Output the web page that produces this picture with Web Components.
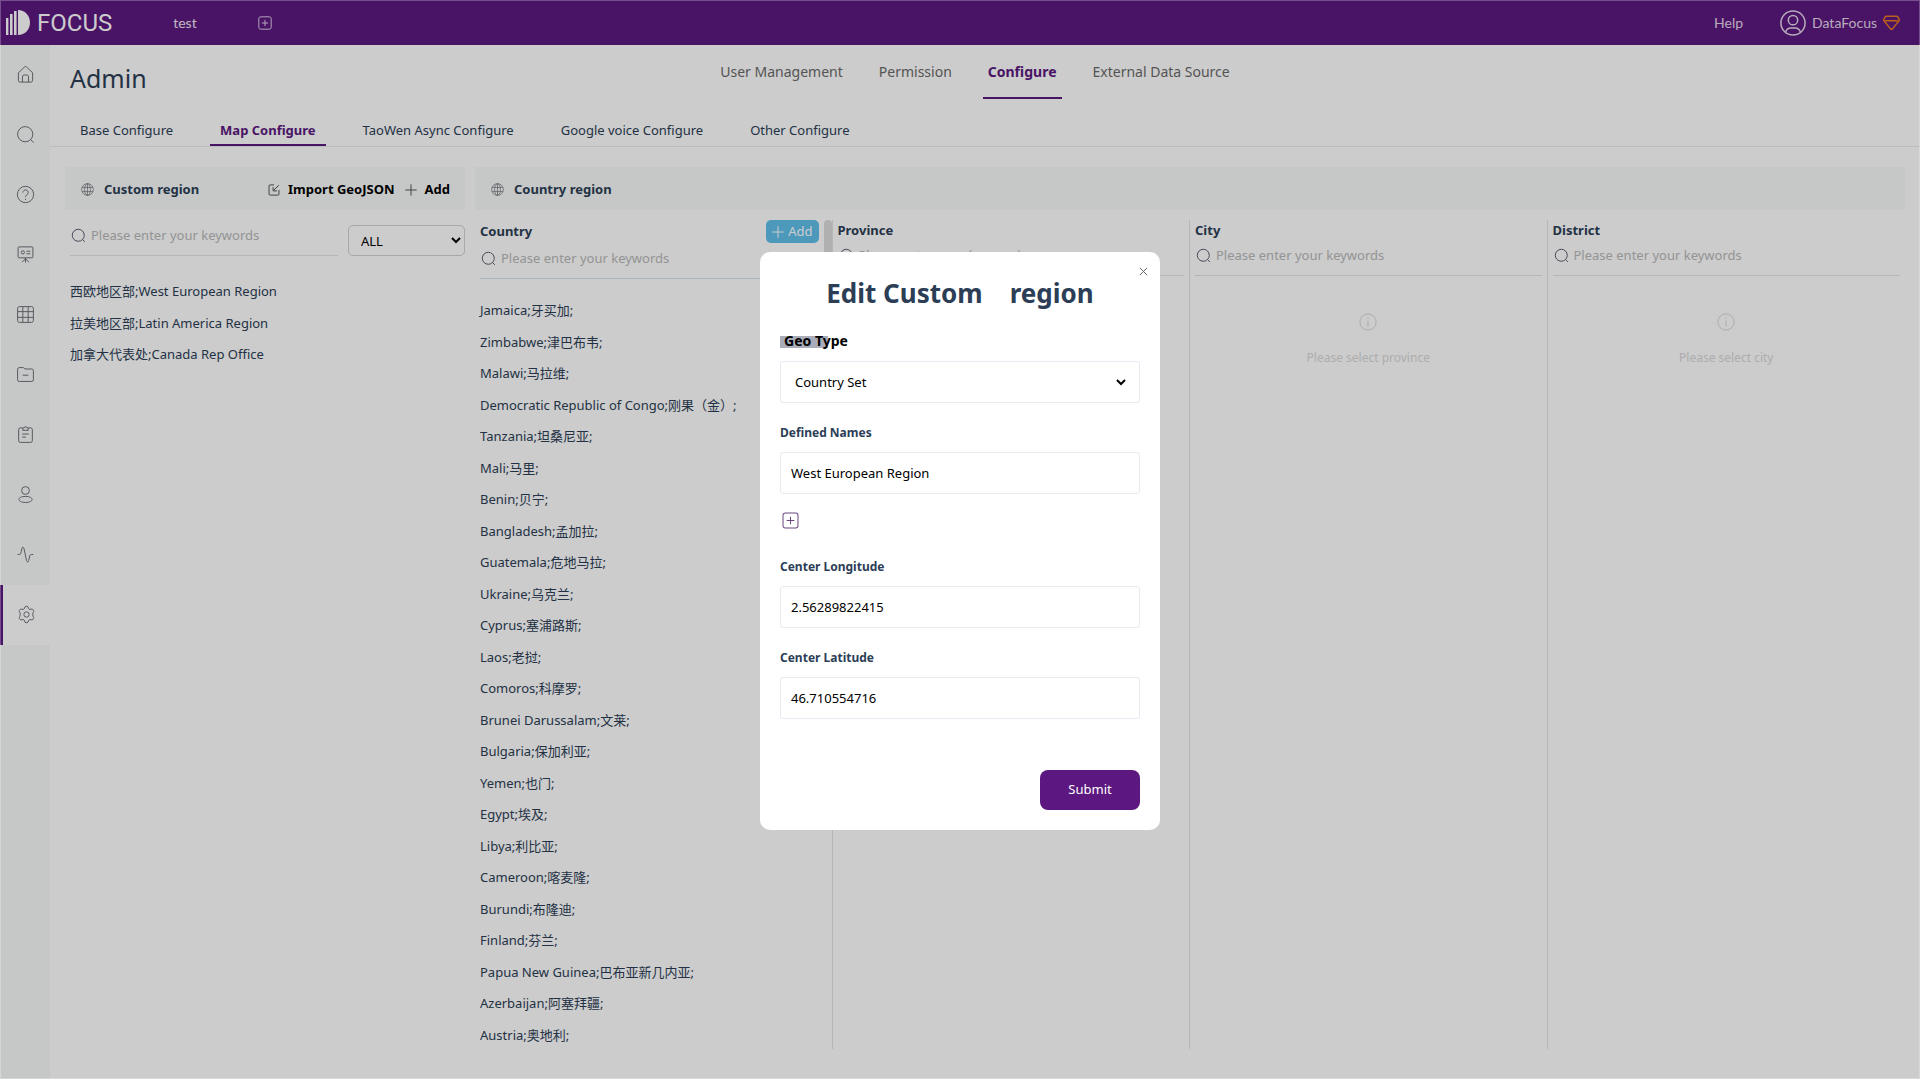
<!DOCTYPE html>
<html lang="en">
<head>
<meta charset="utf-8">
<title>Admin - Map Configure</title>
<style>
  :root {
    --purple: #5c1880;
    --ink: #2c3e56;
    --tint: #f8fbfa;
    --line: #e4e4e4;
    --muted: #b9b9b9;
  }
  html, body { height: 100%; }
  body {
    margin: 0;
    background: #fff;
    color: var(--ink);
    font: 13px/1.5 "Noto Sans", "Noto Sans CJK SC", sans-serif;
    overflow: hidden;
  }
</style>
</head>
<body>
<admin-app></admin-app>

<script>
const ICONS = {
  home: '<path d="M2.5 8.2 9.2 1.9a1.2 1.2 0 0 1 1.6 0l6.7 6.3v8a1.8 1.8 0 0 1-1.8 1.8H4.3a1.8 1.8 0 0 1-1.8-1.8zM6.8 18v-5.5a2 2 0 0 1 2-2h2.4a2 2 0 0 1 2 2V18"/>',
  search: '<circle cx="9.7" cy="9.7" r="8"/><path d="m15.3 15.3 3.2 3.2"/>',
  help: '<circle cx="10" cy="10" r="8.6"/><path d="M7.2 8a2.8 2.8 0 1 1 4.4 2.300c-1.100.8-1.600 1.300-1.600 2.500M10 14.400v1.300"/>',
  board: '<rect x="2.200" y="2" width="15.600" height="11.500" rx="1"/><circle cx="7.200" cy="7.800" r="1.700"/><path d="M11 6.500h4M11 9.200h4M10 13.500v5M10 14.500l-3.600 3.600M10 14.500l3.600 3.600"/>',
  table: '<rect x="1.700" y="1.700" width="16.600" height="16.600" rx="2"/><path d="M1.700 7h16.600M1.700 13h16.600M7.200 1.700v16.600M12.800 1.700v16.600"/>',
  folder: '<path d="M1.700 4.500a1.800 1.800 0 0 1 1.800-1.800h4.300l1.500 1.500h7.200a1.800 1.800 0 0 1 1.800 1.800v9.500a1.800 1.800 0 0 1-1.800 1.800h-13a1.800 1.800 0 0 1-1.800-1.800zM7 10.700h6"/>',
  clip: '<path d="M6.800 3H4.600a1.800 1.800 0 0 0-1.800 1.800v11.700a1.800 1.800 0 0 0 1.800 1.800h10.800a1.800 1.800 0 0 0 1.800-1.800V4.800A1.800 1.800 0 0 0 15.400 3h-2.200M7.200 5.600V3h1.600a1.300 1.300 0 0 1 2.600 0h1.500v2.600zM6.500 9.500h7M6.500 12.700h4"/>',
  user: '<circle cx="10" cy="5.800" r="4.100"/><path d="M3 15.200c0-1.500 2.500-3.200 7-3.200s7 1.700 7 3.200-2.500 3.200-7 3.200-7-1.700-7-3.200z"/>',
  pulse: '<path d="M1.800 10h1.500c1.500 0 1.700-.8 2.200-3L6.200 3.800c.4-2 1.800-2 2.200 0l2.700 12.600c.5 2 1.900 2 2.300 0l.8-3.800c.4-1.900.8-2.600 2.300-2.600h1.700"/>',
  gear: '<circle cx="10" cy="10" r="2.800"/><path d="M8.400 1.900q1.600-1.300 3.200 0l.6 1.900q.4.900 1.500.8l2-.3q1.300.2 1.900 1.600.2.800-.6 1.900-.9 2.200 0 4.400.8 1.100.6 1.900-.6 1.400-1.900 1.600l-2-.3q-1.100-.1-1.500.8l-.6 1.900q-1.600 1.300-3.200 0l-.6-1.900q-.4-.9-1.500-.8l-2 .3q-1.300-.2-1.900-1.600-.2-.8.6-1.900.9-2.200 0-4.400-.8-1.100-.6-1.900.6-1.400 1.900-1.600l2 .3q1.100.1 1.500-.8z"/>',
  globe: '<circle cx="10" cy="10" r="9"/><ellipse cx="10" cy="10" rx="4.500" ry="9"/><path d="M10 1v18M1.700 6.800h16.600M1.700 13.200h16.600"/>',
  import: '<path d="M10 1.500H3.500a1.800 1.800 0 0 0-1.800 1.800v13.400a1.800 1.800 0 0 0 1.800 1.800h13a1.800 1.800 0 0 0 1.800-1.800V10M18 2 9 11M8.500 5v6.500H15"/>',
  plus: '<path d="M10 .5v19M.5 10h19"/>',
  addbox: '<rect x="1.200" y="1.200" width="17.600" height="17.600" rx="2.500"/><path d="M10 5.500v9M5.500 10h9"/>',
  close: '<path d="m2 2 16 16M18 2 2 18"/>',
  info: '<circle cx="10" cy="10" r="9"/><path d="M10 8.500V15M10 5v1.600"/>',
  avatar: '<circle cx="10" cy="10" r="9.300"/><circle cx="10" cy="7.800" r="3.600"/><path d="M4.300 17c.7-2.300 2-3.200 4-3.200h3.400c2 0 3.300.9 4 3.200"/>',
  gem: '<path d="M4 2.500h12q.8 0 1.300.7l1.600 2.700q.6 1-.1 2l-7.400 9.300q-1.400 1.500-2.800 0L1.200 7.900q-.7-1-.1-2l1.600-2.700q.5-.7 1.300-.7zM2.500 8h15"/>'
};

/* Base class: clones one template per element type into an open shadow root. */
class Base extends HTMLElement {
  connectedCallback() {
    if (this.shadowRoot) return;
    const t = document.createElement('template');
    t.innerHTML = '<style>:host,*{box-sizing:border-box}button,input,select{font:inherit;margin:0}</style>' + this.view();
    this.attachShadow({ mode: 'open' }).append(t.content.cloneNode(true));
  }
  attr(n, d = '') { return this.getAttribute(n) ?? d; }
}

class UiIcon extends Base {
  view() {
    const s = this.attr('size', '18');
    const w = this.attr('stroke', '1') * 20 / s;
    return `<style>:host{display:inline-flex;flex:none}svg{display:block}</style>
    <svg width="${s}" height="${s}" viewBox="0 0 20 20" fill="none" stroke="currentColor" stroke-width="${w}" aria-hidden="true">${ICONS[this.attr('name')]}</svg>`;
  }
}

class AppHeader extends Base {
  view() {
    return `<style>
      :host{display:flex;align-items:center;height:45px;flex:none;background:var(--purple);color:#fff;padding:0 20px 0 6px;font-size:14px}
      .brand{display:flex;align-items:center;gap:7px;font:24px/44px Roboto,sans-serif;color:inherit;text-decoration:none}
      .tab{margin-left:61px;color:#f0e8f4;text-decoration:none;font-family:Lato,sans-serif}
      button{display:flex;padding:0;border:0;background:none;color:#e0cfe8;margin-left:61px}
      nav{margin-left:auto;display:flex;align-items:center;color:#e4d8ea;font-family:Lato,sans-serif}
      a{color:inherit;text-decoration:none}
      .help{margin-right:37px}
      .me{display:flex;align-items:center;gap:6px}
      .gem{color:#ec7a22}
    </style>
    <a class="brand" href="#"><svg width="24" height="25" viewBox="0 0 24 25" fill="currentColor" aria-hidden="true">
      <path d="M0 8h2.400v17H0zM4 4h2.600v21H4zM8 1h2.600v24H8zM12 0c7 0 12 5.500 12 12.500S19 25 12 25z"/></svg><span>FOCUS</span></a>
    <a class="tab" href="#">test</a>
    <button aria-label="New tab"><ui-icon name="addbox" size="14"></ui-icon></button>
    <nav><a class="help" href="#">Help</a>
      <a class="me" href="#"><ui-icon name="avatar" size="26" stroke="1.500"></ui-icon><span>DataFocus</span><ui-icon class="gem" name="gem" size="17" stroke="1.500"></ui-icon></a></nav>`;
  }
}

class AppSidebar extends Base {
  view() {
    const items = ['home','search','help','board','table','folder','clip','user','pulse','gear'];
    return `<style>
      :host{display:block;width:50px;flex:none;background:var(--tint);color:#6e7078}
      nav{display:flex;flex-direction:column}
      a{display:flex;height:60px;padding-bottom:2px;align-items:center;justify-content:center;color:inherit}
      a.on{background:#fff;border-left:3px solid var(--purple)}
    </style><nav>${items.map(n => `<a href="#" aria-label="${n}"${n === 'gear' ? ' class="on" aria-current="page"' : ''}><ui-icon name="${n}" size="19"></ui-icon></a>`).join('')}</nav>`;
  }
}

class NavTabs extends Base {
  view() {
    const top = this.attr('kind') === 'top';
    return `<style>
      :host{display:block}
      nav{display:flex;gap:${top ? 26 : 27}px}
      a{display:block;color:${top ? '#6a6a6a' : 'inherit'};text-decoration:none;white-space:nowrap;border-bottom:2px solid transparent;
        ${top ? 'padding:2px 5px 0;font-size:14px;line-height:50px' : 'padding:2px 10px 0;line-height:28px'}}
      a.on{color:var(--purple);font-weight:bold;border-color:var(--purple)}
    </style><nav>${this.attr('items').split('|').map(t => t === this.attr('active')
      ? `<a class="on" href="#" aria-current="page">${t}</a>` : `<a href="#">${t}</a>`).join('')}</nav>`;
  }
}

class SearchField extends Base {
  view() {
    return `<style>
      :host{display:block}
      label{display:flex;align-items:center;gap:5px;height:36px;padding:0 0 5px 1px;border-bottom:1px solid var(--rule,var(--line))}
      input{flex:1;min-width:0;border:0;padding:1px 0 0;background:none;outline:0;color:inherit}
      input::placeholder{color:var(--muted);opacity:1}
      ui-icon{color:#5c6070}
    </style><label><ui-icon name="search" size="15"></ui-icon><input type="text" placeholder="Please enter your keywords" aria-label="Please enter your keywords"></label>`;
  }
}

class PanelHead extends Base {
  view() {
    return `<style>
      :host{display:flex;align-items:center;gap:10px;height:43px;background:var(--tint);padding:2px 15px 0 16px}
      h2{margin:0;font:inherit;font-weight:bold;flex:1}
      ui-icon{color:#6e7078}
    </style><ui-icon name="globe" size="13" stroke=".7"></ui-icon><h2>${this.attr('label')}</h2><slot></slot>`;
  }
}

class PlainAction extends Base {
  view() {
    return `<style>
      :host{display:block}
      button{display:flex;align-items:center;gap:8px;border:0;padding:0;background:none;color:#000;font-weight:bold}
      ui-icon{color:#555}
    </style><button><ui-icon name="${this.attr('icon')}" size="12"></ui-icon><slot></slot></button>`;
  }
}

class RegionList extends Base {
  view() {
    return `<style>
      :host{display:block}
      ul{list-style:none;margin:0;padding:0}
      li{padding:6px 0;white-space:nowrap}
    </style><ul>${this.attr('items').split('|').map(t => `<li>${t}</li>`).join('')}</ul>`;
  }
}

class GeoColumn extends Base {
  view() {
    return `<style>
      :host{display:block;width:25%;flex:none;padding:0 5px;border-right:1px solid var(--line)}
      :host(:last-child){border-right:0}
      h3{margin:0;font-size:13px;line-height:20px}
      .empty{display:flex;flex-direction:column;align-items:center;gap:18px;padding-top:37px;color:#d9d9d9;font-size:12px}
      p{margin:0;line-height:18px}
    </style><h3>${this.attr('label')}</h3><search-field></search-field>
    ${this.attr('empty') ? `<div class="empty"><ui-icon name="info" size="18"></ui-icon><p>${this.attr('empty')}</p></div>` : ''}`;
  }
}

class CountryColumn extends Base {
  view() {
    return `<style>
      :host{display:flex;gap:5px;width:25%;flex:none;padding-left:5px;border-right:1px solid var(--line);overflow:hidden}
      .body{flex:1;min-width:0;--rule:#d5e0ec}
      header{display:flex;align-items:center;justify-content:space-between;height:23px}
      h3{margin:0;font-size:13px}
      button{display:flex;align-items:center;gap:4px;height:23px;padding:0 6px;border:0;border-radius:5px;background:#5fc0ec;color:#fff}
      region-list{margin-top:16px}
      .thumb{width:8px;height:320px;border-radius:4px;background:#dcdcdc}
    </style><div class="body"><header><h3>Country</h3><button><ui-icon name="plus" size="12"></ui-icon>Add</button></header>
    <search-field></search-field>
    <region-list items="Jamaica;牙买加;|Zimbabwe;津巴布韦;|Malawi;马拉维;|Democratic Republic of Congo;刚果（金）;|Tanzania;坦桑尼亚;|Mali;马里;|Benin;贝宁;|Bangladesh;孟加拉;|Guatemala;危地马拉;|Ukraine;乌克兰;|Cyprus;塞浦路斯;|Laos;老挝;|Comoros;科摩罗;|Brunei Darussalam;文莱;|Bulgaria;保加利亚;|Yemen;也门;|Egypt;埃及;|Libya;利比亚;|Cameroon;喀麦隆;|Burundi;布隆迪;|Finland;芬兰;|Papua New Guinea;巴布亚新几内亚;|Azerbaijan;阿塞拜疆;|Austria;奥地利;"></region-list></div>
    <div class="thumb"></div>`;
  }
}

class EditDialog extends Base {
  view() {
    return `<style>
      :host{position:fixed;inset:0;display:flex;align-items:center;justify-content:center;padding-top:2px;background:rgba(0,0,0,.2);border:1px solid rgba(255,255,255,.25)}
      form{position:relative;width:400px;padding:20px;border-radius:10px;background:#fff;display:flex;flex-direction:column}
      h2{margin:0 0 16px;text-align:center;font-size:26px;line-height:42px;white-space:pre}
      .f{display:flex;flex-direction:column;gap:9px;margin-bottom:20px}
      label{font-size:12px;line-height:20px;font-weight:bold}
      label.geo{font-size:14px;line-height:22px;color:#000;align-self:flex-start;padding:0 4px;background:linear-gradient(#a9adb9,#a9adb9) 0 6px/48px 12px no-repeat}
      input,.box{height:42px;width:100%;border:1px solid #e6ebf2;border-radius:3px;background:#fff;color:#000;padding:0 10px;outline:0}
      .box{display:flex}
      select{flex:1;border:0;padding:0;background:#fff;color:#000;outline:0}
      .more,.x{display:flex;border:0;padding:0;background:none}
      .more{margin:-2px 0 28px 2px;color:#6a4680;align-self:flex-start}
      .x{position:absolute;right:12px;top:15px;color:#6a6070}
      .go{align-self:flex-end;width:100px;height:40px;margin-top:31px;border:0;border-radius:8px;background:var(--purple);color:#fff}
    </style><form onsubmit="return false" role="dialog" aria-labelledby="t">
      <button type="button" class="x" aria-label="Close"><ui-icon name="close" size="9"></ui-icon></button>
      <h2 id="t">Edit Custom    region</h2>
      <div class="f"><label class="geo" for="g">Geo Type</label><div class="box"><select id="g"><option>Country Set</option></select></div></div>
      <div class="f"><label for="n">Defined Names</label><input id="n" type="text" value="West European Region"></div>
      <button type="button" class="more" aria-label="Add name"><ui-icon name="addbox" size="17"></ui-icon></button>
      <div class="f"><label for="lo">Center Longitude</label><input id="lo" type="text" value="2.56289822415"></div>
      <div class="f"><label for="la">Center Latitude</label><input id="la" type="text" value="46.710554716"></div>
      <button class="go">Submit</button>
    </form>`;
  }
}

class AdminApp extends Base {
  view() {
    return `<style>
      :host{display:flex;flex-direction:column;height:100vh}
      .shell{display:flex;flex:1;min-height:0}
      main{flex:1;min-width:0;display:flex;flex-direction:column}
      .title{display:grid;grid-template-columns:1fr auto 1fr;padding:0 20px 0 0;height:54px}
      h1{margin:13px 0 0 20px;font-size:25px;line-height:40px;font-weight:normal}
      .sub{padding:15px 20px 0;border-bottom:1px solid #ececec}
      .panels{flex:1;min-height:0;display:flex;gap:10px;padding:20px 15px 30px}
      .custom{width:400px;flex:none}
      .country{flex:1;min-width:0;display:flex;flex-direction:column;gap:10px}
      .filter{display:flex;gap:10px;padding:10px 0 0 5px}
      .filter search-field{flex:1}
      select{width:117px;height:31px;margin-top:5px;padding:0 0 0 8px;border:1px solid #d2d2d2;border-radius:5px;background:#fff;color:#000}
      .custom region-list{margin:20px 0 0 5px}
      .cols{flex:1;min-height:0;display:flex}
    </style>
    <app-header></app-header>
    <div class="shell"><app-sidebar></app-sidebar>
      <main>
        <div class="title"><h1>Admin</h1><nav-tabs kind="top" items="User Management|Permission|Configure|External Data Source" active="Configure"></nav-tabs></div>
        <nav-tabs class="sub" items="Base Configure|Map Configure|TaoWen Async Configure|Google voice Configure|Other Configure" active="Map Configure"></nav-tabs>
        <div class="panels">
          <section class="custom">
            <panel-head label="Custom region"><plain-action icon="import">Import GeoJSON</plain-action><plain-action icon="plus">Add</plain-action></panel-head>
            <div class="filter"><search-field></search-field><select aria-label="Region type"><option>ALL</option></select></div>
            <region-list items="西欧地区部;West European Region|拉美地区部;Latin America Region|加拿大代表处;Canada Rep Office"></region-list>
          </section>
          <section class="country">
            <panel-head label="Country region"></panel-head>
            <div class="cols"><country-column></country-column><geo-column label="Province"></geo-column>
              <geo-column label="City" empty="Please select province"></geo-column><geo-column label="District" empty="Please select city"></geo-column></div>
          </section>
        </div>
      </main>
    </div>
    <edit-dialog></edit-dialog>`;
  }
}

Object.entries({
  'ui-icon': UiIcon, 'app-header': AppHeader, 'app-sidebar': AppSidebar, 'nav-tabs': NavTabs,
  'search-field': SearchField, 'panel-head': PanelHead, 'plain-action': PlainAction, 'region-list': RegionList,
  'geo-column': GeoColumn, 'country-column': CountryColumn, 'edit-dialog': EditDialog, 'admin-app': AdminApp
}).forEach(([n, c]) => customElements.define(n, c));
</script>
</body>
</html>
